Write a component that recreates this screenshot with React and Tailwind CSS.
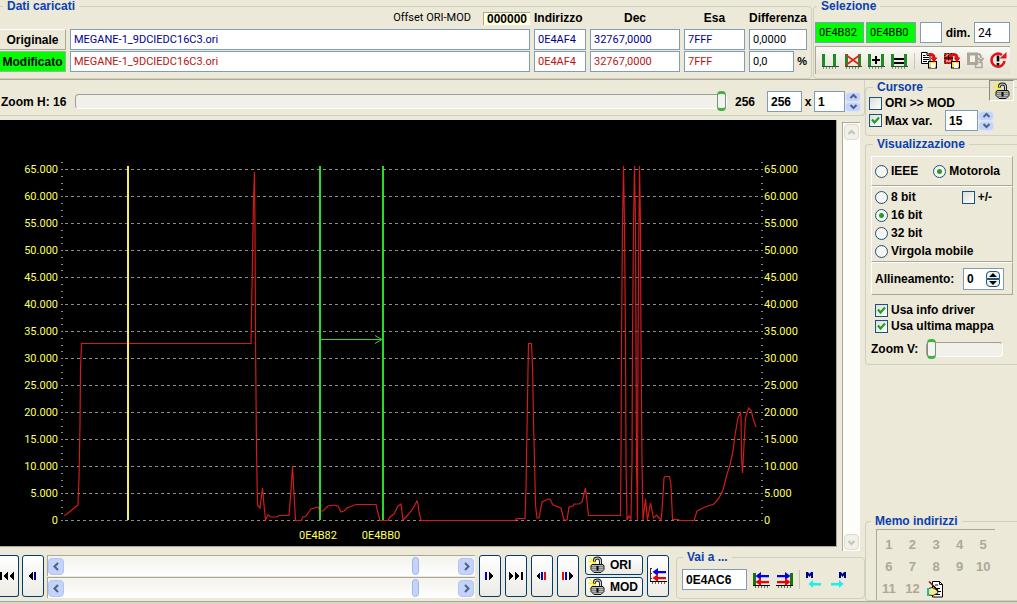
import { useState } from 'react';

const BASELINE = 400.5;
const ROW_STEP = 27;

const trace = [
  [64, 395.5], [67, 394], [73, 389], [78, 385], [79, 358], [80, 304], [80.5, 250], [81.5, 223.5], [251, 223.5],
  [251.5, 195], [252.5, 140], [253.5, 80], [254.5, 52], [255, 110], [255.5, 218], [256.5, 330], [257.5, 385],
  [260, 388], [262.5, 368], [264, 385], [265.5, 400], [268, 395], [271, 397], [277, 397], [279, 395.5],
  [289, 395.5], [291, 370], [292.5, 346], [294, 373], [295.5, 400.5], [301, 400.5], [303, 397], [306, 396],
  [311, 389], [318, 387], [320, 391], [323, 391], [328, 386], [334, 385], [338, 386], [341, 392], [344, 391],
  [347, 388], [356, 384.5], [376, 384.5], [378, 393], [380, 400.5], [388, 400.5], [390, 397], [394, 394],
  [398, 386], [401, 384], [403, 400], [406, 397], [412, 390], [417, 381], [418, 384], [419, 392], [421, 400.5],
  [515, 400.5], [517, 398.5], [525, 398.5], [526, 368], [527, 310], [528, 250], [528.5, 223.5], [531.5, 223.5],
  [532.5, 247], [533.5, 300], [534.5, 340], [535.5, 385], [537, 398], [539, 398], [542, 382], [548, 379],
  [550, 379], [553, 385], [561, 388], [564, 400], [567, 400], [569, 387], [573, 386], [574, 384], [579, 384],
  [582, 382], [585.5, 368], [587, 382], [588.5, 395.5], [620.5, 395.5], [621, 337], [621.5, 221], [622.5, 105],
  [623.5, 46], [624.5, 106], [625.5, 224], [626, 342], [627, 400], [629, 396], [631, 399], [632, 341],
  [632.5, 223], [633.5, 105], [634.5, 46], [635.5, 105], [636.5, 342], [637.5, 400], [638, 224], [639, 100],
  [639.5, 46], [640.5, 106], [641, 224], [642, 342], [643, 400], [645.5, 379], [647.5, 400], [650.5, 383],
  [653.5, 398], [656.5, 395], [661, 400], [662, 391], [664, 358], [665, 356.5], [669.5, 356.5], [671, 365],
  [672.5, 399.5], [678, 399.5], [680, 400.5], [694, 400.5], [697, 391], [705, 387], [714, 384], [719, 378],
  [723, 370], [727, 354], [730, 345], [733, 331], [735, 315], [738, 298], [740.5, 293], [741, 296], [741.5, 337],
  [742.5, 353], [744, 325], [745.5, 298], [748.5, 288], [751, 290], [753, 298], [756, 307],
];

const gridRows = Array.from({ length: 14 }, (_, i) => ({
  y: BASELINE - i * ROW_STEP,
  label: i === 0 ? '0' : `${i * 5}.000`,
}));

const minorTicks = Array.from({ length: 54 }, (_, i) => Math.floor(BASELINE - i * 6.75) + 0.5);

const rangeBase =
  'appearance-none bg-transparent [&::-webkit-slider-runnable-track]:h-[15px] [&::-webkit-slider-runnable-track]:rounded-sm [&::-webkit-slider-runnable-track]:border [&::-webkit-slider-runnable-track]:border-t-[#9d9c99] [&::-webkit-slider-runnable-track]:border-l-[#9d9c99] [&::-webkit-slider-runnable-track]:border-r-white [&::-webkit-slider-runnable-track]:border-b-white [&::-webkit-slider-runnable-track]:bg-[#f1f0e9] [&::-webkit-slider-thumb]:-mt-1 [&::-webkit-slider-thumb]:h-[20px] [&::-webkit-slider-thumb]:w-[9px] [&::-webkit-slider-thumb]:appearance-none [&::-webkit-slider-thumb]:rounded-sm [&::-webkit-slider-thumb]:border-x [&::-webkit-slider-thumb]:border-y-3 [&::-webkit-slider-thumb]:border-x-[#7b8f86] [&::-webkit-slider-thumb]:border-y-[#3fb33f] [&::-webkit-slider-thumb]:bg-[#f3f3ef]';

const Group = ({ title, className = '', legendClass = 'ml-[7px]', children }) => (
  <fieldset className={`min-w-0 border border-[#d0d0bf] ${className}`}>
    <legend className={`px-1 text-xs leading-3 font-bold text-[#0b3fb0] ${legendClass}`}>{title}</legend>
    {children}
  </fieldset>
);

const Field = ({ label, value, className = '' }) => (
  <input
    type="text"
    aria-label={label}
    defaultValue={value}
    className={`h-[21px] min-w-0 border border-[#7f9db9] px-[3px] outline-none ${className}`}
  />
);

const Chevron = ({ dir, className = '' }) => {
  const paths = {
    up: 'M1.5 6 L4.5 3 L7.5 6',
    down: 'M1.5 3 L4.5 6 L7.5 3',
    left: 'M6 1 L2.5 4.5 L6 8',
    right: 'M3 1 L6.5 4.5 L3 8',
  };
  return (
    <svg viewBox="0 0 9 9" className={`size-[9px] ${className}`} fill="none" stroke="currentColor" strokeWidth="2">
      <path d={paths[dir]} />
    </svg>
  );
};

const Spinner = ({ label }) => (
  <span className="flex w-4 flex-col">
    {['up', 'down'].map((dir) => (
      <button
        key={dir}
        type="button"
        aria-label={`${label} ${dir}`}
        className="flex h-[10px] items-center justify-center rounded-sm border border-[#dbe4fb] bg-[#c3d3fb] text-[#4d6185]"
      >
        <Chevron dir={dir} />
      </button>
    ))}
  </span>
);

const Check = ({ children, checked, className = '' }) => (
  <label className={`flex items-center gap-[3px] ${className}`}>
    <span className="relative flex size-[13px]">
      <input
        type="checkbox"
        defaultChecked={checked}
        className="peer size-[13px] appearance-none border border-[#1c5180] bg-linear-to-br from-[#dcdcd7] to-white"
      />
      <svg
        viewBox="0 0 13 13"
        className="pointer-events-none absolute inset-0 hidden peer-checked:block"
        fill="none"
        stroke="#21a121"
        strokeWidth="2.2"
      >
        <path d="M3 5.5 L5.5 8.5 L10 3.5" />
      </svg>
    </span>
    {children}
  </label>
);

const Radio = ({ name, checked, children }) => (
  <label className="flex items-center gap-[3px]">
    <input
      type="radio"
      name={name}
      defaultChecked={checked}
      className="size-[13px] appearance-none rounded-full border border-[#1c5180] bg-[#f6f6f3] checked:bg-[radial-gradient(circle,#21a121_2px,#f6f6f3_3px)]"
    />
    {children}
  </label>
);

const Padlock = () => (
  <svg viewBox="0 0 18 18" className="size-[18px] shrink-0">
    <path d="M1 1 L8 8 M5.5 0.5 L6 9 M0 5.5 H8 M1 11 L8 5" stroke="#f5ee2e" strokeWidth="1.3" />
    <path d="M6.5 5.5 V4.5 Q6.5 2 9.5 2 Q12.5 2 12.5 5 V9" fill="none" stroke="#111" strokeWidth="3" />
    <path d="M6.5 5 V4.5 Q6.5 2 9.5 2 Q12.5 2 12.5 5 V9" fill="none" stroke="#d4d4d4" strokeWidth="1.2" />
    <path d="M4 8.5 H15 L16 10 V13.5 L13 16.5 H6 L3 13.5 V10 Z" fill="#b4b4b4" stroke="#111" />
    <path d="M4 10.5 H15 M4 12.5 H15 M5 14.5 H14" stroke="#777" strokeWidth="0.8" />
    <path d="M9.5 10 V14.5" stroke="#000" strokeWidth="2" />
  </svg>
);

const RangeIcon = ({ kind }) => {
  const far = kind === 'open' ? 11 : 13;
  return (
    <svg viewBox="0 0 17 16" className="h-4 w-[17px]">
      <g shapeRendering="crispEdges">
        <rect x="0" y="1" width="3" height="13" fill="#1f8a2a" />
        <rect x={far} y="1" width="3" height="13" fill="#1f8a2a" />
        <rect x="0" y="13" width="17" height="1" fill="#1d5a24" />
        <path d="M1.5 14 V16 M4.5 14 V16 M7.5 14 V16 M10.5 14 V16 M13.5 14 V16" stroke="#888" />
        {kind === 'plus' && <path d="M4 7 H12 M8 3 V11" stroke="#000" strokeWidth="2" />}
        {kind === 'equal' && <path d="M3 6 H13 M3 10 H13" stroke="#000" strokeWidth="2" />}
      </g>
      {kind === 'cross' && <path d="M1 2 L15 12 M15 2 L1 12" stroke="#e0261c" strokeWidth="1.8" />}
    </svg>
  );
};

const CopyIcon = () => (
  <svg viewBox="0 0 17 17" className="size-[17px]">
    <path d="M0.5 0.5 H6 L9 3.5 V11.5 H0.5 Z" fill="#fff" stroke="#000" />
    <path d="M6 0.5 V3.5 H9 M2 3.5 H4.5 M2 5.5 H8 M2 7.5 H8 M2 9.5 H6" fill="none" stroke="#000" />
    <rect x="7.5" y="9.5" width="8" height="6.5" fill="#f6e04a" stroke="#000" />
    <rect x="10" y="11" width="4" height="5" fill="#fff" />
    <path d="M8 2.5 H10 Q13 3 13 6" fill="none" stroke="#e01010" strokeWidth="3" />
    <path d="M9.5 5.5 H16.5 L13 10.5 Z" fill="#e01010" />
  </svg>
);

const CopyOriginalIcon = () => (
  <svg viewBox="0 0 17 17" className="size-[17px]">
    <path d="M0.5 1.5 H8.5 V11.5 H0.5 Z" fill="#e01010" stroke="#500" strokeDasharray="2 1" />
    <path d="M0 6 H9 M4.5 1 V9" stroke="#000" />
    <path d="M2 4.5 L4.5 2 M2 9 H7" stroke="#fff" />
    <rect x="7.5" y="9.5" width="8" height="6.5" fill="#f6e04a" stroke="#000" />
    <rect x="10" y="11" width="4" height="5" fill="#fff" />
    <path d="M8 2.5 H10 Q13 3 13 6" fill="none" stroke="#e01010" strokeWidth="3" />
    <path d="M9.5 5.5 H16.5 L13 10.5 Z" fill="#e01010" />
  </svg>
);

// greyed-out copy target
const PasteIcon = () => (
  <svg viewBox="0 0 17 17" className="size-[17px]" fill="none">
    <path d="M1.5 2 H9.5 V11.5 H1.5 Z" fill="#f4f2e8" stroke="#aca899" strokeWidth="3" />
    <path d="M8 2 H12 Q14 3 14 6 M11 6 L14 9 L16.5 6" stroke="#aca899" strokeWidth="2" />
    <path d="M8.5 10.5 H15 V15.5 H8.5 Z" stroke="#aca899" strokeWidth="1.5" />
  </svg>
);

const RefreshIcon = () => (
  <svg viewBox="0 0 17 17" className="size-[17px]">
    <path d="M12 3 A6.5 6.5 0 1 0 14.5 9" fill="none" stroke="#e01818" strokeWidth="2.6" />
    <path d="M9.5 6.5 H16.5 V0 Z" fill="#e01818" />
    <path d="M8 3.5 V9.5 M8 11 V13.5" stroke="#000" strokeWidth="2.6" />
  </svg>
);

const SyncIcon = ({ flip, wall }) => (
  <svg viewBox="0 0 17 16" className="h-4 w-[17px]">
    <g transform={flip ? 'translate(17 0) scale(-1 1)' : undefined}>
      {wall && <rect x="0" y="1" width="3" height="12" fill="#107810" />}
      {!wall && <path d="M0.5 0 V14 M2 0.5 H0 M2 5.5 H0 M2 10.5 H0" stroke="#333" />}
      <path d="M2.5 4 L8 0 V3 H16 V5.2 H8 V8 Z" fill="#0000f0" />
      <path d="M2.5 10 L8 6 V9 H16 V11.2 H8 V14 Z" fill="#f00000" />
    </g>
    <path d="M0 13.5 H17" stroke="#000" />
    <path d="M2.5 14 V16 M5.5 14 V16 M8.5 14 V16 M11.5 14 V16 M14.5 14 V16" stroke="#666" />
  </svg>
);

const MarkerIcon = ({ flip }) => (
  <svg viewBox="0 0 15 16" className="h-4 w-[15px]">
    <g transform={flip ? 'translate(15 0) scale(-1 1)' : undefined}>
      <path d="M2.5 12 L7 8 V11 H15 V13.4 H7 V16 Z" fill="#19f0f0" />
      <path d="M1 6 V0.5 L3.5 3.5 L6 0.5 V6" fill="none" stroke="#000090" strokeWidth="2" />
    </g>
  </svg>
);

const NoteIcon = () => (
  <svg viewBox="0 0 17 17" className="size-[17px]">
    <path d="M5.5 0.5 H12.5 L15.5 3.5 V16 H5.5 Z" fill="#fff" stroke="#000" />
    <path d="M12.5 0.5 V3.5 H15.5" fill="none" stroke="#000" />
    <path d="M8 4 H11 M10 7.5 H13 M11 10.5 H14 M8 13.5 H13" stroke="#000" />
    <path d="M1.5 7.5 L5 6.5 L10 9 L11 12 L6 14.5 L1.5 14 Z" fill="#f3ee8a" stroke="#000" strokeWidth="0.8" />
    <rect x="0" y="7" width="2" height="8" fill="#24b8a8" />
    <path d="M2 0.5 L6 4.5" stroke="#8a1616" strokeWidth="1.6" />
    <path d="M6 4.5 L11 9.5" stroke="#000" strokeWidth="1.6" />
  </svg>
);

const navIcons = {
  first: [['#000', 'M0 1 H2 V9 H0 Z'], ['#000', 'M8 1 V9 L3 5 Z'], ['#000', 'M14 1 V9 L9 5 Z']],
  prev: [['#000', 'M7 1 V9 L2 5 Z'], ['#000090', 'M8 1 H10 V9 H8 Z']],
  next: [['#0000d0', 'M2 1 H4 V9 H2 Z'], ['#000', 'M6 1 V9 L11 5 Z']],
  last: [['#000', 'M0 1 V9 L5 5 Z'], ['#000', 'M6 1 V9 L11 5 Z'], ['#000', 'M12 1 H14 V9 H12 Z']],
  prevDiff: [['#000', 'M5 1 V9 L1 5 Z'], ['#0000d0', 'M6 1 H8 V9 H6 Z'], ['#e01010', 'M9 1 H11 V9 H9 Z']],
  nextDiff: [['#e01010', 'M1 1 H3 V9 H1 Z'], ['#0000d0', 'M4 1 H6 V9 H4 Z'], ['#000', 'M8 1 V9 L13 5 Z']],
};

const NavButton = ({ icon, label, className = 'w-[22px] rounded-[3px] border' }) => (
  <button
    type="button"
    aria-label={label}
    className={`flex h-[42px] shrink-0 items-center justify-center border-[#003c74] bg-linear-to-b from-white to-[#ecebe5] ${className}`}
  >
    <svg viewBox="0 0 14 10" className="h-[10px] w-[14px] shrink-0" shapeRendering="crispEdges">
      {navIcons[icon].map(([fill, d]) => (
        <path key={d} d={d} fill={fill} />
      ))}
    </svg>
  </button>
);

const HScroll = ({ label }) => (
  <div className="flex h-[21px] items-center border-t border-l border-t-[#aca899] border-l-[#aca899] bg-linear-to-b from-[#f3f2ec] to-white pr-px">
    <button type="button" aria-label={`${label} left`} className="flex h-[17px] w-4 items-center justify-center rounded-sm border border-[#b3c4ee] bg-[#c3d3fb] text-[#4d6185]">
      <Chevron dir="left" />
    </button>
    <input
      type="range"
      aria-label={label}
      defaultValue="90"
      className="h-[18px] min-w-0 flex-1 appearance-none bg-transparent [&::-webkit-slider-thumb]:h-[18px] [&::-webkit-slider-thumb]:w-[7px] [&::-webkit-slider-thumb]:appearance-none [&::-webkit-slider-thumb]:rounded-sm [&::-webkit-slider-thumb]:border [&::-webkit-slider-thumb]:border-[#9fb5e6] [&::-webkit-slider-thumb]:bg-[#c3d3fb]"
    />
    <button type="button" aria-label={`${label} right`} className="flex h-[17px] w-4 items-center justify-center rounded-sm border border-[#b3c4ee] bg-[#c3d3fb] text-[#4d6185]">
      <Chevron dir="right" />
    </button>
  </div>
);

const Chart = () => (
  <svg viewBox="0 0 836 426" className="block w-full font-[Roboto,sans-serif] text-[11px]">
    <g stroke="#8a8a8a" shapeRendering="crispEdges">
      {gridRows.map(({ y }) => (
        <path key={y} d={`M65 ${y - 0.5} H759`} strokeDasharray="3 3" />
      ))}
      {minorTicks.map((y) => (
        <path key={y} d={`M61 ${y - 0.5} H63 M761 ${y - 0.5} H763`} />
      ))}
    </g>
    <g fill="#ffff60">
      {gridRows.map(({ y, label }) => (
        <g key={y}>
          <text x="58" y={y + 3.5} textAnchor="end">{label}</text>
          <text x="764" y={y + 3.5}>{label}</text>
        </g>
      ))}
      <text x="318" y="419" textAnchor="middle">0E4B82</text>
      <text x="381" y="419" textAnchor="middle">0E4BB0</text>
    </g>
    <polyline points={trace.map((p) => p.join(',')).join(' ')} fill="none" stroke="#d01c1c" strokeWidth="1.2" />
    <path d="M128 46 V400" stroke="#f5ef52" strokeWidth="2" />
    <path d="M320 46 V400 M383 46 V400" stroke="#27dc27" strokeWidth="2" />
    <path d="M321 219.5 H382 M375 215.5 L382 219.5 L375 223.5" fill="none" stroke="#2fd42f" />
  </svg>
);

const LoadedData = () => (
  <Group title="Dati caricati" legendClass="ml-[3px]" className="flex-1 rounded-r border-l-0">
    <div className="grid grid-cols-[66px_1fr_52px_90px_61px_58px] gap-x-1 gap-y-px pr-1 text-[11px]">
      <div className="col-span-2 flex h-4 items-start justify-end gap-3 font-[Roboto,sans-serif] leading-3">
        <span>Offset ORI-MOD</span>
        <output className="border-t border-l border-[#aca899] bg-[#ffffe1] px-[3px] font-['Liberation_Sans',sans-serif] text-xs leading-3 font-bold">
          000000
        </output>
      </div>
      <span className="text-xs leading-3 font-bold">Indirizzo</span>
      <span className="text-center text-xs leading-3 font-bold">Dec</span>
      <span className="text-center text-xs leading-3 font-bold">Esa</span>
      <span className="text-xs leading-3 font-bold">Differenza</span>

      <button type="button" className="border border-l-0 border-t-white border-r-[#aca899] border-b-[#aca899] text-xs leading-4 font-bold">Originale</button>
      <Field label="File originale" value="MEGANE-1_9DCIEDC16C3.ori" className="bg-white font-[Roboto,sans-serif] text-[#000090]" />
      <Field label="Indirizzo originale" value="0E4AF4" className="bg-white font-[Roboto,sans-serif] text-[#000090]" />
      <Field label="Dec originale" value="32767,0000" className="bg-white font-[Roboto,sans-serif] text-[#000090]" />
      <Field label="Esa originale" value="7FFF" className="bg-white font-[Roboto,sans-serif] text-[#000090]" />
      <Field label="Differenza" value="0,0000" className="bg-white font-[Roboto,sans-serif]" />

      <button type="button" className="border border-l-0 border-[#8fb98f] bg-[#00ff00] text-xs leading-4 font-bold">Modificato</button>
      <Field label="File modificato" value="MEGANE-1_9DCIEDC16C3.ori" className="bg-white font-[Roboto,sans-serif] text-[#b81414]" />
      <Field label="Indirizzo modificato" value="0E4AF4" className="bg-white font-[Roboto,sans-serif] text-[#b81414]" />
      <Field label="Dec modificato" value="32767,0000" className="bg-white font-[Roboto,sans-serif] text-[#b81414]" />
      <Field label="Esa modificato" value="7FFF" className="bg-white font-[Roboto,sans-serif] text-[#b81414]" />
      <div className="flex items-center justify-between">
        <Field label="Differenza percentuale" value="0,0" className="w-[45px] bg-white font-[Roboto,sans-serif]" />
        <span className="font-bold">%</span>
      </div>
    </div>
  </Group>
);

const Selection = () => (
  <Group title="Selezione" legendClass="ml-[3px]" className="w-[204px] rounded-l border-r-0">
    <div className="flex flex-col gap-[3px] pt-[10px] pr-[7px] pb-1 pl-px">
      <div className="flex items-center gap-[2px] font-[Roboto,sans-serif] text-[11px]">
        <Field label="Inizio selezione" value="0E4B82" className="w-[49px] bg-[#00ff00]" />
        <Field label="Fine selezione" value="0E4BB0" className="w-[50px] bg-[#00ff00]" />
        <Field label="Colonna" value="" className="ml-0.5 w-[22px] bg-white" />
        <label htmlFor="dim" className="flex-1 text-center font-['Liberation_Sans',sans-serif] text-xs font-bold">dim.</label>
        <input id="dim" type="text" defaultValue="24" className="h-[21px] w-9 border border-[#7f9db9] bg-white px-[3px] text-xs outline-none" />
      </div>
      <div className="flex h-7 items-center justify-between border-t border-l border-[#aca899] bg-linear-to-b from-[#faf9f6] to-[#e4e1d0] pr-[3px] pl-[6px]">
        <button type="button" aria-label="Seleziona"><RangeIcon kind="open" /></button>
        <button type="button" aria-label="Annulla selezione"><RangeIcon kind="cross" /></button>
        <button type="button" aria-label="Aggiungi"><RangeIcon kind="plus" /></button>
        <button type="button" aria-label="Uguaglia"><RangeIcon kind="equal" /></button>
        <span className="h-4 w-px bg-[#c9c6b5]" />
        <button type="button" aria-label="Copia"><CopyIcon /></button>
        <button type="button" aria-label="Copia originale"><CopyOriginalIcon /></button>
        <button type="button" aria-label="Incolla" disabled><PasteIcon /></button>
        <button type="button" aria-label="Ripristina"><RefreshIcon /></button>
      </div>
    </div>
  </Group>
);

const ZoomBar = () => (
  <div className="flex h-9 items-center rounded-br border-r border-b border-[#d0d0bf] pt-2 pr-[3px] pl-px text-xs font-bold">
    <label htmlFor="zoomH" className="w-[74px]">Zoom H: 16</label>
    <input id="zoomH" type="range" defaultValue="100" className={`h-5 min-w-0 flex-1 ${rangeBase}`} />
    <span className="w-10 pl-2">256</span>
    <Field label="Colonne" value="256" className="w-[35px] bg-white" />
    <span className="w-3 text-center">x</span>
    <Field label="Righe" value="1" className="w-[31px] bg-white" />
    <Spinner label="Righe" />
  </div>
);

const BottomBar = () => (
  <div className="flex items-start text-xs font-bold">
    <div className="flex min-w-0 flex-1 items-start gap-1 pt-1">
      <div className="flex min-w-0 flex-1 gap-[3px]">
        <NavButton icon="first" label="Inizio" className="w-[19px] justify-end rounded-r-[3px] border border-l-0 pr-1" />
        <NavButton icon="prev" label="Indietro" />
        <div className="flex min-w-0 flex-1 flex-col gap-px">
          <HScroll label="Scorri originale" />
          <HScroll label="Scorri modificato" />
        </div>
      </div>
      <NavButton icon="next" label="Avanti" />
      <NavButton icon="last" label="Fine" />
      <NavButton icon="prevDiff" label="Differenza precedente" />
      <NavButton icon="nextDiff" label="Differenza successiva" />
      <div className="ml-0.5 flex flex-col gap-0.5">
        {['ORI', 'MOD'].map((name) => (
          <button
            key={name}
            type="button"
            className="flex h-5 w-[58px] items-center gap-1 rounded-[3px] border border-[#003c74] bg-linear-to-b from-white to-[#ecebe5] pl-0.5"
          >
            <Padlock />
            {name}
          </button>
        ))}
      </div>
      <button
        type="button"
        aria-label="Allinea"
        className="flex h-[42px] w-[22px] items-center justify-center rounded-[3px] border border-[#003c74] bg-linear-to-b from-white to-[#ecebe5]"
      >
        <SyncIcon />
      </button>
    </div>
    <Group title="Vai a ..." legendClass="ml-[6px]" className="ml-[7px] w-[189px] rounded">
      <div className="flex items-center gap-[6px] pt-[6px] pb-2 pl-[5px]">
        <Field label="Vai a indirizzo" value="0E4AC6" className="w-[65px] bg-white" />
        <button type="button" aria-label="Selezione precedente"><SyncIcon wall /></button>
        <button type="button" aria-label="Selezione successiva"><SyncIcon wall flip /></button>
        <span className="h-[19px] w-px bg-[#c9c6b5]" />
        <button type="button" aria-label="Marcatore precedente"><MarkerIcon /></button>
        <button type="button" aria-label="Marcatore successivo" className="ml-1"><MarkerIcon flip /></button>
      </div>
    </Group>
  </div>
);

const Sidebar = () => {
  const [align, setAlign] = useState(0);
  const panel = 'border border-t-white border-l-white border-r-[#aca899] border-b-[#aca899]';

  return (
    <aside className="flex w-[152px] flex-col text-xs leading-[14px] font-bold">
      <div className="relative pt-px">
        <Group title="Cursore" className="rounded-l border-r-0">
          <div className="pt-[3px] pb-1 pl-[3px]">
            <Check>ORI &gt;&gt; MOD</Check>
            <div className="flex items-center">
              <Check checked className="w-[76px]">Max var.</Check>
              <Field label="Max var." value="15" className="w-[33px] bg-white" />
              <Spinner label="Max var." />
            </div>
          </div>
        </Group>
        <button
          type="button"
          aria-label="Blocca cursore"
          className="absolute top-0 right-[3px] flex h-[21px] w-[25px] items-center justify-center border border-t-[#8d8a7c] border-l-[#8d8a7c] border-r-white border-b-white bg-[#e4e1d0]"
        >
          <Padlock />
        </button>
      </div>

      <Group title="Visualizzazione" className="mt-0.5 rounded-l border-r-0">
        <div className="flex flex-col pt-[6px] pr-1 pb-[5px] pl-[5px]">
          <div className={`flex h-[30px] items-center gap-[15px] pl-[3px] ${panel}`}>
            <Radio name="order">IEEE</Radio>
            <Radio name="order" checked>Motorola</Radio>
          </div>
          <div className={`flex justify-between py-px pr-5 pl-[3px] leading-[18px] ${panel}`}>
            <div>
              <Radio name="bits">8 bit</Radio>
              <Radio name="bits" checked>16 bit</Radio>
              <Radio name="bits">32 bit</Radio>
              <Radio name="bits"><span className="whitespace-nowrap">Virgola mobile</span></Radio>
            </div>
            <Check className="-ml-8 self-start">+/-</Check>
          </div>
          <div className={`flex h-[33px] items-center justify-between pr-2 pl-[3px] ${panel}`}>
            <label htmlFor="align">Allineamento:</label>
            <span className="flex h-[22px] w-[41px] items-center justify-between border border-[#7f9db9] bg-white px-[3px]">
              <input
                id="align"
                type="text"
                value={align}
                onChange={(e) => setAlign(e.target.value)}
                className="w-4 min-w-0 outline-none"
              />
              <span className="flex flex-col">
                <button type="button" aria-label="Aumenta" onClick={() => setAlign(Number(align) + 1)} className="rounded-t-sm border border-[#1c5180] bg-[#f1f0e9] px-0.5">
                  <svg viewBox="0 0 8 6" className="h-[6px] w-2"><path d="M0 5 L4 1 L8 5 Z" /></svg>
                </button>
                <button type="button" aria-label="Diminuisci" onClick={() => setAlign(Number(align) - 1)} className="rounded-b-sm border border-[#1c5180] bg-[#f1f0e9] px-0.5">
                  <svg viewBox="0 0 8 6" className="h-[6px] w-2"><path d="M0 1 L4 5 L8 1 Z" /></svg>
                </button>
              </span>
            </span>
          </div>
          <div className="flex flex-col pt-[7px] pl-1 leading-4">
            <Check checked>Usa info driver</Check>
            <Check checked>Usa ultima mappa</Check>
          </div>
          <div className="flex items-center justify-between pt-[5px] pr-[10px]">
            <label htmlFor="zoomV">Zoom V:</label>
            <input id="zoomV" type="range" defaultValue="0" className={`h-5 w-[77px] ${rangeBase}`} />
          </div>
        </div>
      </Group>

      <Group title="Memo indirizzi" legendClass="ml-[5px]" className="mt-auto rounded-l border-r-0">
        <div className="pt-0.5 pr-[22px] pl-[10px]">
          <div className="grid grid-cols-5 border-t border-l border-[#aca899] pt-1 text-[#aca899]">
            {Array.from({ length: 12 }, (_, i) => (
              <button key={i} type="button" disabled className="h-[22px] text-[13px]">
                {i + 1}
              </button>
            ))}
            <button type="button" aria-label="Memorizza indirizzo" className="flex h-[22px] items-center justify-center">
              <NoteIcon />
            </button>
          </div>
        </div>
      </Group>
    </aside>
  );
};

const App = () => (
  <div className="flex min-h-screen flex-col bg-[#ece9d8] font-['Liberation_Sans',sans-serif] text-black">
    <header className="flex gap-px border-b border-[#aca899]">
      <LoadedData />
      <Selection />
    </header>
    <div className="flex flex-1">
      <main className="flex min-w-0 flex-1 flex-col">
        <ZoomBar />
        <div className="flex gap-[5px] pt-1 pr-[5px]">
          <div className="min-w-0 flex-1 self-start border-r border-b border-[#aca899] bg-black">
            <Chart />
          </div>
          <div className="mt-0.5 flex h-[429px] w-[18px] flex-col justify-between border-t border-l border-[#aca899] bg-[#fdfdfa] p-px">
            <button type="button" aria-label="Scorri su" className="flex h-4 items-center justify-center rounded-sm border border-[#dddbd0] bg-[#f1f0e9] text-[#c5c3b8]">
              <Chevron dir="up" />
            </button>
            <button type="button" aria-label="Scorri giù" className="flex h-4 items-center justify-center rounded-sm border border-[#dddbd0] bg-[#f1f0e9] text-[#c5c3b8]">
              <Chevron dir="down" />
            </button>
          </div>
        </div>
        <BottomBar />
      </main>
      <Sidebar />
    </div>
    <footer className="h-[3px] border-t border-[#aca899] bg-[#d8d5c4]" />
  </div>
);

export default App;
